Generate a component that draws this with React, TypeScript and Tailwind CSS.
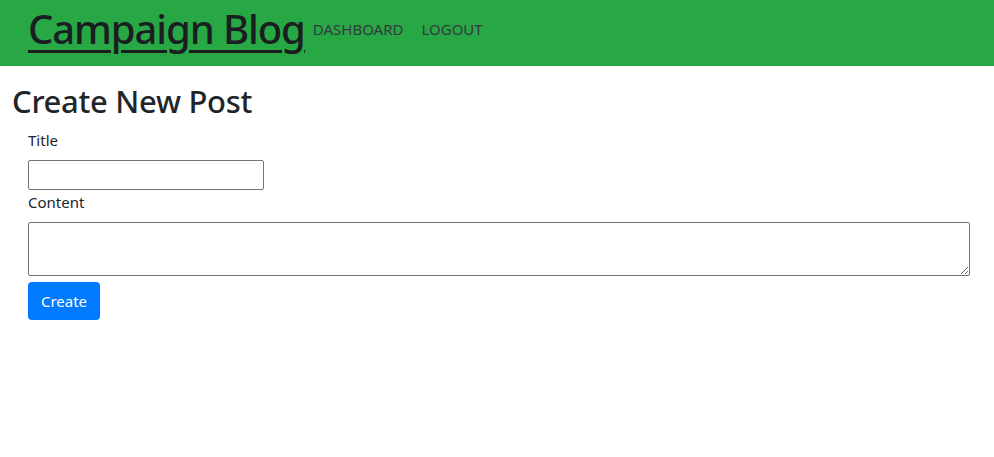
export default function App() {
  return (
    <div className="min-h-[457px] bg-white text-[#212529] font-['Noto_Sans',sans-serif]">
      {/* Header */}
      <header className="h-[66px] bg-[#28a745] flex items-start pl-[28px]">
        <a href="#" className="text-[40px] leading-[48px] mt-[5px] font-medium underline decoration-[3px] underline-offset-[6px] text-[#1b1e21] tracking-[-1.1px]">
          Campaign Blog
        </a>
        <nav className="flex gap-[18px] ml-[8px] mt-[17px] text-[15px] leading-[24px] text-[#343a40]">
          <a href="#">DASHBOARD</a>
          <a href="#">LOGOUT</a>
        </nav>
      </header>

      {/* Body */}
      <main className="px-[12px]">
        <h2 className="text-[31px] leading-[38px] font-medium mt-[16px] mb-[8px] tracking-[-0.3px]">Create New Post</h2>
        <form className="pl-[16px] flex flex-col items-start">
          <label className="text-[15px] leading-[24px] mb-[8px]">Title</label>
          <input type="text" className="w-[236px] h-[30px] border border-[#767676] rounded-[2px]" />
          <label className="text-[15px] leading-[24px] mb-[8px]">Content</label>
          <textarea className="w-[942px] h-[54px] border border-[#767676] rounded-[2px]" />
          <button type="button" className="mt-[6px] w-[72px] h-[38px] bg-[#007bff] text-white text-[15px] rounded-[4px]">
            Create
          </button>
        </form>
      </main>
    </div>
  );
}
